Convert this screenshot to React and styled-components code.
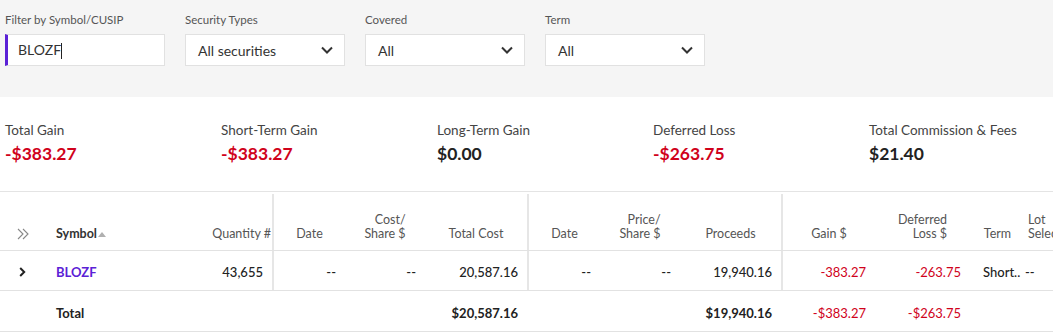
import React from "react";
import styled, { createGlobalStyle } from "styled-components";

const Global = createGlobalStyle`
  html, body { margin: 0; padding: 0; background: #fff; }
  body { font-family: Lato, "Noto Sans", Arial, sans-serif; color: #222; }
  * { box-sizing: border-box; }
`;

const Page = styled.div`
  width: 1053px;
  overflow: hidden;
`;

const FilterBar = styled.div`
  background: #f5f5f5;
  height: 97px;
  padding: 12px 5px 0;
  display: flex;
  gap: 20px;
`;

const Field = styled.div`
  display: flex;
  flex-direction: column;
  gap: 6px;
  width: 160px;
`;

const FieldLabel = styled.label`
  font-size: 11.5px;
  line-height: 16px;
  color: #555;
`;

const Box = styled.div`
  height: 32px;
  background: #fff;
  border: 1px solid #e1e1e1;
  border-left: ${(p) => (p.$active ? "3px solid #5b21d6" : "1px solid #e1e1e1")};
  display: flex;
  align-items: center;
  justify-content: space-between;
  padding: 0 ${(p) => (p.$active ? "10px" : "11px")} 0 ${(p) => (p.$active ? "10px" : "12px")};
  font-size: 14px;
  color: #333;
`;

const Caret = styled.span`
  display: inline-block;
  width: 1px;
  height: 16px;
  background: #222;
  vertical-align: middle;
`;

const Summary = styled.div`
  display: grid;
  grid-template-columns: repeat(5, 216px);
  padding: 25px 5px 0;
  height: 94px;
`;

const Stat = styled.div`
  display: flex;
  flex-direction: column;
  gap: 4px;
`;

const StatLabel = styled.div`
  font-size: 13.5px;
  line-height: 17px;
  color: #444;
`;

const StatValue = styled.div`
  font-size: 17.5px;
  line-height: 22px;
  font-weight: 700;
  color: ${(p) => (p.$neg ? "#d0021b" : "#222")};
`;

const TableWrap = styled.div`
  border-top: 1px solid #e4e4e4;
  overflow: hidden;
`;

const COLS = "45px 130px 97px 73px 80px 102px 73px 80px 101px 94px 95px 55px 80px";

const Row = styled.div`
  display: grid;
  grid-template-columns: ${COLS};
  height: ${(p) => p.$h}px;
  border-bottom: 1px solid #e2e2e2;
  width: 1105px;
`;

const HeadCell = styled.div`
  display: flex;
  align-items: flex-end;
  justify-content: ${(p) => p.$justify || "center"};
  padding: 0 ${(p) => p.$pr || 0}px ${(p) => p.$pb ?? 9}px ${(p) => p.$pl || 0}px;
  margin-top: 2px;
  border-left: ${(p) => (p.$divider ? "2px solid #e6e6e6" : "none")};
  font-size: 12.5px;
  line-height: 14px;
  color: #555;
`;

const HeadText = styled.span`
  text-align: ${(p) => p.$align || "right"};
  white-space: pre-line;
  display: inline-flex;
  align-items: center;
`;

const SymbolHead = styled.span`
  font-weight: 700;
  color: #333;
  display: inline-flex;
  align-items: center;
`;

const SortTri = styled.span`
  width: 0;
  height: 0;
  border-left: 4px solid transparent;
  border-right: 4px solid transparent;
  border-bottom: 5px solid #b0b0b0;
  margin-left: 1px;
  margin-top: 1px;
`;

const Cell = styled.div`
  display: flex;
  align-items: center;
  justify-content: ${(p) => p.$justify || "flex-end"};
  padding: 3px ${(p) => p.$pr ?? 9}px 0 ${(p) => p.$pl || 0}px;
  border-left: ${(p) => (p.$divider ? "2px solid #e6e6e6" : "none")};
  font-size: 13px;
  font-weight: ${(p) => (p.$bold ? 700 : p.$neg ? 400 : 500)};
  color: ${(p) => (p.$neg ? "#d0021b" : p.$purple ? "#5b21d6" : "#222")};
  white-space: nowrap;
  overflow: hidden;
`;

const Chevron = () => (
  <svg width="12" height="8" viewBox="0 0 12 8">
    <path d="M1 1.5l5 5 5-5" fill="none" stroke="#333" strokeWidth="2" />
  </svg>
);

const DoubleChevron = () => (
  <svg width="12" height="12" viewBox="0 0 12 12">
    <path d="M1 1l5 5-5 5M6 1l5 5-5 5" fill="none" stroke="#888" strokeWidth="1.1" />
  </svg>
);

const RowChevron = () => (
  <svg width="7" height="10" viewBox="0 0 7 10">
    <path d="M1.2 1l4 4-4 4" fill="none" stroke="#222" strokeWidth="2" />
  </svg>
);

const filters = [
  { label: "Security Types", value: "All securities" },
  { label: "Covered", value: "All" },
  { label: "Term", value: "All" },
];

const stats = [
  { label: "Total Gain", value: "-$383.27", neg: true },
  { label: "Short-Term Gain", value: "-$383.27", neg: true },
  { label: "Long-Term Gain", value: "$0.00" },
  { label: "Deferred Loss", value: "-$263.75", neg: true },
  { label: "Total Commission & Fees", value: "$21.40" },
];

export default function App() {
  return (
    <Page>
      <Global />
      <FilterBar>
        <Field>
          <FieldLabel>Filter by Symbol/CUSIP</FieldLabel>
          <Box $active>
            <span>
              BLOZF
              <Caret />
            </span>
          </Box>
        </Field>
        {filters.map((f) => (
          <Field key={f.label}>
            <FieldLabel>{f.label}</FieldLabel>
            <Box>
              <span>{f.value}</span>
              <Chevron />
            </Box>
          </Field>
        ))}
      </FilterBar>

      <Summary>
        {stats.map((s) => (
          <Stat key={s.label}>
            <StatLabel>{s.label}</StatLabel>
            <StatValue $neg={s.neg}>{s.value}</StatValue>
          </Stat>
        ))}
      </Summary>

      <TableWrap>
        <Row $h={59}>
          <HeadCell $pb={10}>
            <DoubleChevron />
          </HeadCell>
          <HeadCell $justify="flex-start" $pl={11}>
            <SymbolHead>
              Symbol
              <SortTri />
            </SymbolHead>
          </HeadCell>
          <HeadCell $justify="flex-end" $pr={1}>
            <HeadText>Quantity #</HeadText>
          </HeadCell>
          <HeadCell $divider>
            <HeadText>Date</HeadText>
          </HeadCell>
          <HeadCell>
            <HeadText>{"Cost/\nShare $"}</HeadText>
          </HeadCell>
          <HeadCell>
            <HeadText>Total Cost</HeadText>
          </HeadCell>
          <HeadCell $divider>
            <HeadText>Date</HeadText>
          </HeadCell>
          <HeadCell>
            <HeadText>{"Price/\nShare $"}</HeadText>
          </HeadCell>
          <HeadCell>
            <HeadText>Proceeds</HeadText>
          </HeadCell>
          <HeadCell $divider>
            <HeadText>Gain $</HeadText>
          </HeadCell>
          <HeadCell>
            <HeadText>{"Deferred\nLoss $"}</HeadText>
          </HeadCell>
          <HeadCell>
            <HeadText>Term</HeadText>
          </HeadCell>
          <HeadCell $justify="flex-start" $pl={3}>
            <HeadText $align="left">{"Lot\nSelection"}</HeadText>
          </HeadCell>
        </Row>

        <Row $h={40}>
          <Cell $justify="center" $pr={0}>
            <RowChevron />
          </Cell>
          <Cell $justify="flex-start" $pl={11} $bold $purple>
            BLOZF
          </Cell>
          <Cell>43,655</Cell>
          <Cell $divider>--</Cell>
          <Cell>--</Cell>
          <Cell>20,587.16</Cell>
          <Cell $divider>--</Cell>
          <Cell>--</Cell>
          <Cell>19,940.16</Cell>
          <Cell $divider $neg>-383.27</Cell>
          <Cell $neg>-263.75</Cell>
          <Cell $justify="flex-start" $pl={13} $pr={0}>
            Short..
          </Cell>
          <Cell $justify="flex-start" $pl={0}>
            --
          </Cell>
        </Row>

        <Row $h={41}>
          <Cell />
          <Cell $justify="flex-start" $pl={11} $bold>
            Total
          </Cell>
          <Cell />
          <Cell />
          <Cell />
          <Cell $bold>$20,587.16</Cell>
          <Cell />
          <Cell />
          <Cell $bold>$19,940.16</Cell>
          <Cell $neg>-$383.27</Cell>
          <Cell $neg>-$263.75</Cell>
          <Cell />
          <Cell />
        </Row>
      </TableWrap>
    </Page>
  );
}
